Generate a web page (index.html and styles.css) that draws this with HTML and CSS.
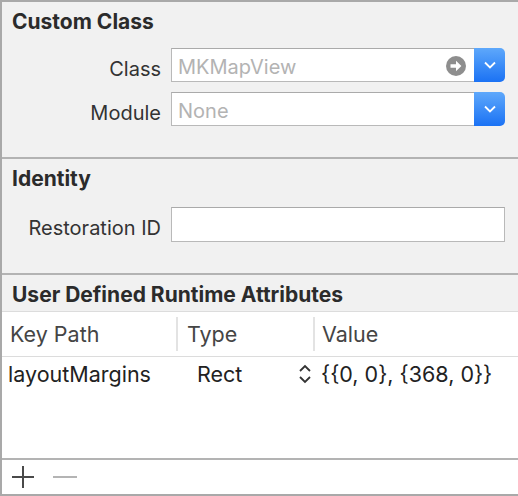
FILE: index.html
```html
<!DOCTYPE html>
<html lang="en">
<head>
    <meta charset="UTF-8">
    <title>Identity Inspector</title>
    <link rel="stylesheet" href="styles.css">
</head>
<body>
    <div class="inspector">
        <div class="section custom-class">
            <h2>Custom Class</h2>
            <div class="form">
                <label>Class</label>
                <div class="field">
                    <div class="combo">
                        <span class="placeholder">MKMapView</span>
                        <svg class="goto" width="20" height="20" viewBox="0 0 20 20">
                            <circle cx="10" cy="10" r="10" fill="#8e8e8e"/>
                            <path d="M4.5 8.2h5.5V4.8L15.4 10 10 15.2v-3.4H4.5z" fill="#fff"/>
                        </svg>
                    </div>
                    <div class="popup">
                        <svg width="14" height="10" viewBox="0 0 14 10"><path d="M2 2.5l5 5 5-5" fill="none" stroke="#fff" stroke-width="1.8"/></svg>
                    </div>
                </div>
                <label>Module</label>
                <div class="field">
                    <div class="combo"><span class="placeholder">None</span></div>
                    <div class="popup">
                        <svg width="14" height="10" viewBox="0 0 14 10"><path d="M2 2.5l5 5 5-5" fill="none" stroke="#fff" stroke-width="1.8"/></svg>
                    </div>
                </div>
            </div>
        </div>

        <div class="section identity">
            <h2>Identity</h2>
            <div class="form">
                <label>Restoration ID</label>
                <div class="field"><div class="combo"></div></div>
            </div>
        </div>

        <div class="section runtime">
            <h2>User Defined Runtime Attributes</h2>
            <div class="table">
                <div class="thead">
                    <div class="col key">Key Path</div>
                    <div class="col type">Type</div>
                    <div class="col value">Value</div>
                </div>
                <div class="row">
                    <div class="col key">layoutMargins</div>
                    <div class="col type">
                        <span>Rect</span>
                        <svg class="stepper" width="14" height="22" viewBox="0 0 14 22">
                            <path d="M2 8l5-5 5 5M2 14l5 5 5-5" fill="none" stroke="#333" stroke-width="1.8"/>
                        </svg>
                    </div>
                    <div class="col value">{{0, 0}, {368, 0}}</div>
                </div>
            </div>
            <div class="footer">
                <svg width="24" height="24" viewBox="0 0 24 24"><path d="M12 1v22M1 12h22" stroke="#4a4a4a" stroke-width="2"/></svg>
                <svg class="remove" width="26" height="24" viewBox="0 0 26 24"><path d="M1 12h24" stroke="#b4b4b4" stroke-width="2"/></svg>
            </div>
        </div>
    </div>
</body>
</html>
```

FILE: styles.css
```css
body {
    margin: 0;
    font-family: Inter, "Noto Sans", sans-serif;
    color: #2f2f2f;
}

.inspector {
    width: 516px;
    height: 492px;
    background-color: #f1f1f1;
    border-top: 2px solid #a9a9a9;
    border-left: 2px solid #a9a9a9;
    border-bottom: 2px solid #a9a9a9;
    display: flex;
    flex-direction: column;
}

.section {
    border-bottom: 2px solid #b3b3b3;
}

h2 {
    margin: 0;
    padding-left: 10px;
    font-size: 21px;
    font-weight: 700;
    color: #2b2b2b;
}

.custom-class {
    height: 155px;
}

.custom-class h2 {
    padding-top: 7px;
    height: 31px;
}

.identity {
    height: 114px;
}

.identity h2 {
    padding-top: 7px;
    height: 41px;
}

.form {
    display: grid;
    grid-template-columns: 159px 1fr;
    column-gap: 10px;
    row-gap: 10px;
    padding-right: 13px;
    margin-top: 8px;
}

.identity .form {
    margin-top: 0;
}

label {
    box-sizing: border-box;
    height: 34px;
    text-align: right;
    font-size: 20px;
    line-height: 34px;
    padding-top: 4px;
    color: #333;
}

.field {
    display: flex;
    height: 34px;
}

.identity .field {
    height: 35px;
}

.combo {
    flex: 1;
    background-color: #fff;
    border: 1px solid #b9b9b9;
    border-top-color: #aaa;
    border-right: none;
    display: flex;
    align-items: center;
    padding-left: 6px;
    padding-right: 8px;
}

.identity .combo {
    border-right: 1px solid #b9b9b9;
}

.placeholder {
    flex: 1;
    font-size: 20px;
    padding-top: 4px;
    color: #b3b3b3;
}

.goto {
    margin-top: 1px;
}

.popup {
    width: 31px;
    background: linear-gradient(#5ea8fb, #1b72f4);
    border-radius: 0 5px 5px 0;
    display: flex;
    align-items: center;
    justify-content: center;
}

.runtime {
    flex: 1;
    border-bottom: none;
    display: flex;
    flex-direction: column;
}

.runtime h2 {
    padding-top: 7px;
    height: 29px;
    border-bottom: 1px solid #dcdcdc;
}

.table {
    flex: 1;
    background-color: #fff;
    border-bottom: 2px solid #b3b3b3;
}

.thead, .row {
    display: flex;
    font-size: 21.5px;
}

.col {
    box-sizing: border-box;
}

.thead {
    height: 44px;
    align-items: center;
    border-bottom: 1px solid #dcdcdc;
    color: #454545;
}

.thead .col {
    height: 34px;
    line-height: 34px;
}

.thead .type, .thead .value {
    border-left: 2px solid #e3e3e3;
}

.key {
    width: 174px;
    padding-left: 8px;
}

.type {
    width: 137px;
    padding-left: 9px;
}

.thead .value {
    padding-left: 7px;
}

.row {
    height: 34px;
    align-items: center;
    color: #222;
}

.row .key {
    padding-left: 6px;
}

.row .type {
    display: flex;
    align-items: center;
    justify-content: space-between;
    padding-left: 21px;
    padding-right: 1px;
}

.row .value {
    padding-left: 8px;
}

.footer {
    height: 34px;
    background-color: #fff;
    display: flex;
    align-items: center;
    padding-left: 9px;
    gap: 17px;
}
```
